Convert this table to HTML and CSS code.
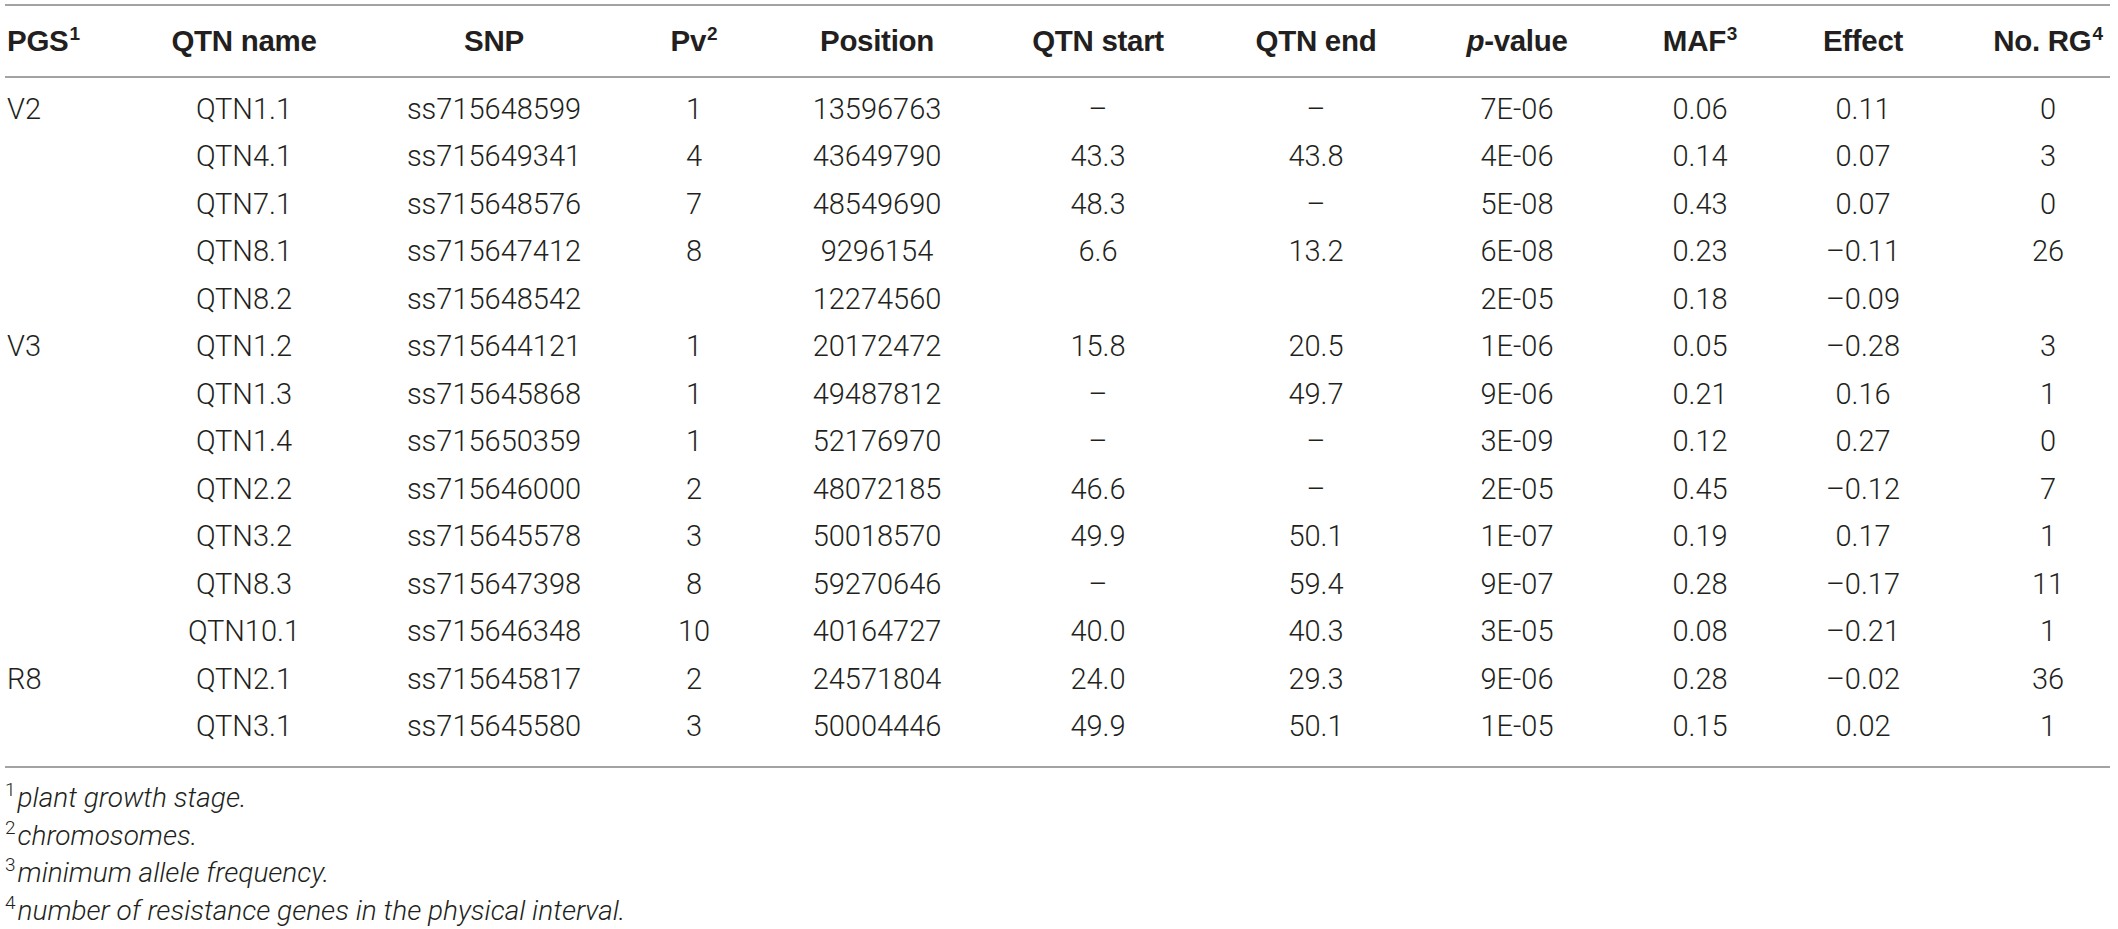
FILE: index.html
```html
<!DOCTYPE html>
<html lang="en">
<head>
<meta charset="utf-8">
<title>QTN table</title>
<link rel="stylesheet" href="styles.css">
</head>
<body>
<div class="wrap">
<table class="qtn">
<colgroup>
<col class="c-pgs"><col class="c-name"><col class="c-snp"><col class="c-pv"><col class="c-pos"><col class="c-start"><col class="c-end"><col class="c-p"><col class="c-maf"><col class="c-eff"><col class="c-rg">
</colgroup>
<thead>
<tr>
<th class="left">PGS<sup>1</sup></th><th>QTN name</th><th>SNP</th><th>Pv<sup>2</sup></th><th>Position</th><th>QTN start</th><th>QTN end</th><th><i>p</i>-value</th><th>MAF<sup>3</sup></th><th>Effect</th><th class="rg">No. RG<sup>4</sup></th>
</tr>
</thead>
<tbody>
<tr class="first"><td class="left">V2</td><td>QTN1.1</td><td>ss715648599</td><td>1</td><td>13596763</td><td>–</td><td>–</td><td>7E-06</td><td>0.06</td><td>0.11</td><td class="rg">0</td></tr>
<tr><td class="left"></td><td>QTN4.1</td><td>ss715649341</td><td>4</td><td>43649790</td><td>43.3</td><td>43.8</td><td>4E-06</td><td>0.14</td><td>0.07</td><td class="rg">3</td></tr>
<tr><td class="left"></td><td>QTN7.1</td><td>ss715648576</td><td>7</td><td>48549690</td><td>48.3</td><td>–</td><td>5E-08</td><td>0.43</td><td>0.07</td><td class="rg">0</td></tr>
<tr><td class="left"></td><td>QTN8.1</td><td>ss715647412</td><td>8</td><td>9296154</td><td>6.6</td><td>13.2</td><td>6E-08</td><td>0.23</td><td>–0.11</td><td class="rg">26</td></tr>
<tr><td class="left"></td><td>QTN8.2</td><td>ss715648542</td><td></td><td>12274560</td><td></td><td></td><td>2E-05</td><td>0.18</td><td>–0.09</td><td class="rg"></td></tr>
<tr><td class="left">V3</td><td>QTN1.2</td><td>ss715644121</td><td>1</td><td>20172472</td><td>15.8</td><td>20.5</td><td>1E-06</td><td>0.05</td><td>–0.28</td><td class="rg">3</td></tr>
<tr><td class="left"></td><td>QTN1.3</td><td>ss715645868</td><td>1</td><td>49487812</td><td>–</td><td>49.7</td><td>9E-06</td><td>0.21</td><td>0.16</td><td class="rg">1</td></tr>
<tr><td class="left"></td><td>QTN1.4</td><td>ss715650359</td><td>1</td><td>52176970</td><td>–</td><td>–</td><td>3E-09</td><td>0.12</td><td>0.27</td><td class="rg">0</td></tr>
<tr><td class="left"></td><td>QTN2.2</td><td>ss715646000</td><td>2</td><td>48072185</td><td>46.6</td><td>–</td><td>2E-05</td><td>0.45</td><td>–0.12</td><td class="rg">7</td></tr>
<tr><td class="left"></td><td>QTN3.2</td><td>ss715645578</td><td>3</td><td>50018570</td><td>49.9</td><td>50.1</td><td>1E-07</td><td>0.19</td><td>0.17</td><td class="rg">1</td></tr>
<tr><td class="left"></td><td>QTN8.3</td><td>ss715647398</td><td>8</td><td>59270646</td><td>–</td><td>59.4</td><td>9E-07</td><td>0.28</td><td>–0.17</td><td class="rg">11</td></tr>
<tr><td class="left"></td><td>QTN10.1</td><td>ss715646348</td><td>10</td><td>40164727</td><td>40.0</td><td>40.3</td><td>3E-05</td><td>0.08</td><td>–0.21</td><td class="rg">1</td></tr>
<tr><td class="left">R8</td><td>QTN2.1</td><td>ss715645817</td><td>2</td><td>24571804</td><td>24.0</td><td>29.3</td><td>9E-06</td><td>0.28</td><td>–0.02</td><td class="rg">36</td></tr>
<tr class="last"><td class="left"></td><td>QTN3.1</td><td>ss715645580</td><td>3</td><td>50004446</td><td>49.9</td><td>50.1</td><td>1E-05</td><td>0.15</td><td>0.02</td><td class="rg">1</td></tr>
</tbody>
</table>
<div class="notes">
<p><sup>1</sup><i>plant growth stage.</i></p>
<p><sup>2</sup><i>chromosomes.</i></p>
<p><sup>3</sup><i>minimum allele frequency.</i></p>
<p><sup>4</sup><i>number of resistance genes in the physical interval.</i></p>
</div>
</div>
</body>
</html>
```
FILE: styles.css
```css
html, body {
  margin: 0;
  padding: 0;
  background: #ffffff;
}
body {
  font-family: Roboto, "Liberation Sans", sans-serif;
  color: #231f20;
}
.wrap {
  padding: 4px 8px 0 5px;
}
.qtn {
  width: 2105px;
  table-layout: fixed;
  border-collapse: collapse;
  border-top: 2px solid #a3a3a3;
  border-bottom: 2px solid #a3a3a3;
}
.c-pgs { width: 125px; }
.c-name { width: 228px; }
.c-snp { width: 272px; }
.c-pv { width: 128px; }
.c-pos { width: 238px; }
.c-start { width: 204px; }
.c-end { width: 232px; }
.c-p { width: 170px; }
.c-maf { width: 196px; }
.c-eff { width: 130px; }
.c-rg { width: 182px; }

.qtn th {
  font-family: "Liberation Sans", Arial, sans-serif;
  font-weight: 700;
  font-size: 29.5px;
  letter-spacing: -0.3px;
  height: 70px;
  padding: 0;
  text-align: center;
  vertical-align: middle;
  white-space: nowrap;
  border-bottom: 2px solid #a3a3a3;
}
.qtn sup {
  font-size: 19px;
  line-height: 0;
  vertical-align: 11px;
  margin-left: 1px;
}
.qtn td {
  font-weight: 300;
  font-size: 29px;
  height: 47.5px;
  padding: 0;
  text-align: center;
  vertical-align: middle;
  white-space: nowrap;
}
.qtn .left {
  text-align: left;
  padding-left: 2px;
}
.qtn .rg {
  padding-left: 58px;
}
.qtn tr.first td {
  padding-top: 7px;
}
.qtn tr.last td {
  padding-bottom: 16px;
}
.notes {
  padding-top: 11px;
}
.notes p {
  margin: 0;
  font-size: 28px;
  font-weight: 300;
  line-height: 37.5px;
}
.notes sup {
  font-size: 19px;
  font-style: normal;
  line-height: 0;
  vertical-align: 11px;
  margin-right: 2px;
}
```
